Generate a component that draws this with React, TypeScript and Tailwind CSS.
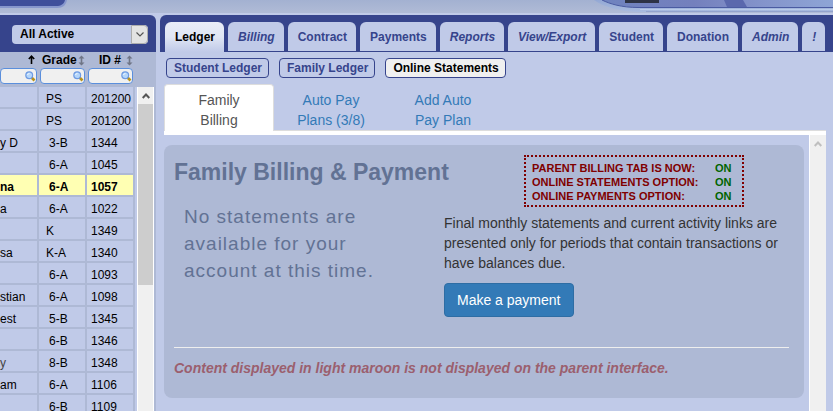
import React from "react";

const FONT = "font-['Liberation_Sans',Arial,sans-serif]";

type Student = { name: string; grade: string; id: string; selected?: boolean; dim?: boolean };

const students: Student[] = [
  { name: "", grade: "PS", id: "201200" },
  { name: "", grade: "PS", id: "201200" },
  { name: "y D", grade: "3-B", id: "1344" },
  { name: "", grade: "6-A", id: "1045" },
  { name: "na", grade: "6-A", id: "1057", selected: true },
  { name: "a", grade: "6-A", id: "1022" },
  { name: "", grade: "K", id: "1349" },
  { name: "sa", grade: "K-A", id: "1340" },
  { name: "", grade: "6-A", id: "1093" },
  { name: "stian", grade: "6-A", id: "1098" },
  { name: "est", grade: "5-B", id: "1345" },
  { name: "", grade: "6-B", id: "1346" },
  { name: "y", grade: "8-B", id: "1348", dim: true },
  { name: "am", grade: "6-A", id: "1106" },
  { name: "", grade: "6-B", id: "1109" },
];

const mainTabs = [
  { label: "Ledger", active: true },
  { label: "Billing", italic: true },
  { label: "Contract" },
  { label: "Payments" },
  { label: "Reports", italic: true },
  { label: "View/Export", italic: true },
  { label: "Student" },
  { label: "Donation" },
  { label: "Admin", italic: true },
  { label: "!", italic: true },
];

const options = [
  "PARENT BILLING TAB IS NOW:",
  "ONLINE STATEMENTS OPTION:",
  "ONLINE PAYMENTS OPTION:",
];

function Banner() {
  return (
    <header className="relative h-[15px] shrink-0 overflow-hidden border-b-2 border-[#c0cae8] bg-linear-to-b from-[#a3b1d1] to-[#b0bbd6]">
      <svg className="absolute top-0 left-0" width="80" height="13" aria-hidden="true">
        <path d="M0 0H67C66 5 63 8 57 8H0Z" fill="#8797cd" />
        <path d="M0 0H65C64 4 61 6 56 6H0Z" fill="#3f4f9b" />
      </svg>
      <svg className="absolute top-0 right-0" width="243" height="13" aria-hidden="true">
        <defs>
          <linearGradient id="sweep" x1="0" x2="1" y1="0" y2="0">
            <stop offset="0" stopColor="#6f83bf" />
            <stop offset="0.4" stopColor="#7480bd" />
            <stop offset="0.7" stopColor="#8494cb" />
            <stop offset="1" stopColor="#8ea5d6" />
          </linearGradient>
          <linearGradient id="rim" x1="0" x2="0" y1="0" y2="1">
            <stop offset="0" stopColor="#93a8d4" />
            <stop offset="1" stopColor="#a9bbdf" />
          </linearGradient>
        </defs>
        <path d="M4 0C14 7 28 11 48 12H243V0Z" fill="url(#rim)" />
        <path d="M12 0C20 4 32 7 48 7.5H243V0Z" fill="url(#sweep)" />
        <path d="M134 0H153L157 7H137Z" fill="#5a68ad" />
        <path d="M35 0H69V3H35Z" fill="#2d3345" />
        <path d="M12 0C20 4 32 7.5 48 7.5H243" fill="none" stroke="#4a5ba2" />
        <path d="M50 9.5H243" stroke="#b9cbe9" />
        <path d="M56 11.5H243" stroke="#93a3cd" />
      </svg>
    </header>
  );
}

function SortIcon({ up = false }: { up?: boolean }) {
  return (
    <svg width="7" height="11" viewBox="0 0 7 11" className="shrink-0" aria-hidden="true">
      {up ? (
        <path d="M3.5 1.5V9M0.8 4L3.5 1.2L6.2 4" fill="none" stroke="#000" strokeWidth="1.6" />
      ) : (
        <path d="M3.5 0.5L6.5 3.5H4.3V7.5H6.5L3.5 10.5L0.5 7.5H2.7V3.5H0.5Z" fill="#6f7586" />
      )}
    </svg>
  );
}

function Magnifier() {
  return (
    <svg width="11" height="11" viewBox="0 0 11 11" className="shrink-0" aria-hidden="true">
      <path d="M6.5 6.5L9.5 9.5" stroke="#b8921a" strokeWidth="2.6" />
      <circle cx="4.2" cy="4.2" r="3.4" fill="#b4d6fb" stroke="#6f9be2" strokeWidth="1.2" />
      <path d="M2.6 4C2.8 3 3.4 2.6 4.4 2.6" stroke="#fff" fill="none" />
    </svg>
  );
}

function Filter({ label }: { label: string }) {
  return (
    <div className="flex h-4 items-center rounded-sm border border-[#5b8fdc] bg-[#f0f0f0]">
      <input aria-label={label} className="h-full w-full min-w-0 bg-transparent text-xs outline-none" />
      <Magnifier />
    </div>
  );
}

function StudentList() {
  return (
    <aside className="flex w-[156px] shrink-0 flex-col overflow-hidden rounded-tr-md bg-[#36448c]">
      <div className="flex h-[37px] shrink-0 items-center pt-px pr-2 pl-3">
        <div className="relative h-[19px] w-full">
          <select
            aria-label="Student filter"
            className="block h-[19px] w-full appearance-none rounded-sm bg-[#c0cae8] pl-2 text-xs leading-[19px] font-bold text-black"
          >
            <option>All Active</option>
          </select>
          <span className="pointer-events-none absolute inset-y-0 right-0 flex w-[17px] items-center justify-center rounded-r-sm border border-[#adadad] bg-[#e3e3e3]">
            <svg width="8" height="5" viewBox="0 0 8 5" aria-hidden="true">
              <path d="M0.5 0.5L4 4L7.5 0.5" fill="none" stroke="#555" strokeWidth="1.2" />
            </svg>
          </span>
        </div>
      </div>
      <div className="flex min-h-0 flex-1 flex-col border-r-2 border-[#aeb9d5] bg-[#c0cae8]">
        <div className="h-[35px] shrink-0 bg-[#aeb9d5]">
          <div className="grid w-[133px] grid-cols-[37px_45px_45px] gap-x-[3px] text-xs font-bold text-black">
            <div className="flex h-4 items-center justify-end pr-[2px]">
              <SortIcon up />
            </div>
            <div className="flex h-4 items-center justify-between pl-[2px]">
              Grade
              <SortIcon />
            </div>
            <div className="flex h-4 items-center justify-between pl-[11px]">
              ID #
              <SortIcon />
            </div>
            <Filter label="Filter by name" />
            <Filter label="Filter by grade" />
            <Filter label="Filter by ID" />
          </div>
        </div>
        <div className="flex min-h-0 flex-1">
          <div className="w-[135px] shrink-0 overflow-hidden bg-[#aeb9d5]">
            <table className="w-[133px] table-fixed border-separate border-spacing-0 text-xs text-black">
              <colgroup>
                <col className="w-[39px]" />
                <col className="w-12" />
                <col className="w-[46px]" />
              </colgroup>
              <tbody>
                {students.map((s, i) => (
                  <tr key={i} className={s.selected ? "bg-[#ffffb3] font-bold" : "bg-[#c0cae8]"}>
                    <td className={`h-[22px] border-r-2 border-b-2 border-[#aeb9d5] p-0 pt-1 leading-4 ${s.dim ? "text-[#444]" : ""}`}>
                      {s.name}
                    </td>
                    <td
                      className={`border-r-2 border-b-2 border-[#aeb9d5] p-0 pt-1 leading-4 ${
                        /^\d/.test(s.grade) ? "pl-[10px]" : "pl-[7px]"
                      }`}
                    >
                      {s.grade}
                    </td>
                    <td className="border-b-2 border-[#aeb9d5] p-0 pt-1 pl-1 leading-4">{s.id}</td>
                  </tr>
                ))}
              </tbody>
            </table>
          </div>
          <div className="ml-[2px] flex w-[17px] flex-col border-x border-white bg-[#f0f0f0]">
            <div className="flex h-[17px] items-center justify-center">
              <ScrollArrow color="#555" />
            </div>
            <div className="h-[181px] bg-[#cdcdcd]" />
          </div>
        </div>
      </div>
    </aside>
  );
}

function ScrollArrow({ color }: { color: string }) {
  return (
    <svg width="8" height="6" viewBox="0 0 8 6" aria-hidden="true">
      <path d="M0.7 5L4 1.5L7.3 5" fill="none" stroke={color} strokeWidth="2" />
    </svg>
  );
}

function MainTabs() {
  return (
    <nav className="flex h-[37px] shrink-0 items-end gap-1 rounded-tl-md bg-[#36448c] pl-[5px] text-xs font-bold whitespace-nowrap">
      {mainTabs.map((t) => (
        <button
          key={t.label}
          className={`rounded-t-md pr-[9px] pl-[10px] ${
            t.active
              ? "h-[30px] bg-linear-to-b from-[#e9edf8] via-[#e0e6f4] to-[#c0cae8] pb-px text-black"
              : "mb-px h-[29px] bg-[#c0cae8] text-[#36448c]"
          } ${t.italic ? "italic" : ""}`}
        >
          {t.label}
        </button>
      ))}
    </nav>
  );
}

function SubNav() {
  const items = ["Student Ledger", "Family Ledger", "Online Statements"];
  return (
    <div className="flex gap-[10px] px-[6px] pt-[6px] text-xs font-bold">
      {items.map((label, i) => (
        <button
          key={label}
          className={`h-5 rounded border border-[#36448c] pr-[6px] pl-[7px] leading-4 whitespace-nowrap ${
            i === 2 ? "bg-[#f0f0f0] text-black" : "text-[#36448c]"
          }`}
        >
          {label}
        </button>
      ))}
    </div>
  );
}

function PageTabs() {
  const link = "w-[110px] pt-[6px] text-center text-[#337ab7]";
  return (
    <nav className="mt-[6px] flex h-[51px] shrink-0 flex-col border-b-4 border-white text-sm leading-5">
      <div className="flex h-[47px] gap-[2px] border-b border-[#ddd]">
        <a href="#billing" className="-mb-px w-[110px] rounded-t border border-b-0 border-[#ddd] bg-white pt-[5px] text-center text-[#555]">
          Family
          <br />
          Billing
        </a>
        <a href="#plans" className={link}>
          Auto Pay
          <br />
          Plans (3/8)
        </a>
        <a href="#add" className={link}>
          Add Auto
          <br />
          Pay Plan
        </a>
      </div>
    </nav>
  );
}

function BillingCard() {
  return (
    <section className="rounded-lg bg-[#aeb9d5] px-[10px] pt-[10px] pb-5">
      <div className="flex">
        <div className="w-[270px] shrink-0">
          <h1 className="pt-1 text-[23px] leading-[26px] font-bold whitespace-nowrap text-[#627294]">
            Family Billing &amp; Payment
          </h1>
          <p className="w-[220px] pt-[18px] pl-[10px] text-[19px] leading-[27px] tracking-[1px] text-[#627294]">
            No statements are available for your account at this time.
          </p>
        </div>
        <div className="min-w-0 flex-1 text-sm leading-5 text-[#333]">
          <div className="mr-[50px] ml-20 border-2 border-dotted border-[#800000] px-[6px] pt-1 pb-[2px]">
            <table className="text-[11px] leading-[14px] font-bold whitespace-nowrap text-[#800000]">
              <tbody>
                {options.map((o) => (
                  <tr key={o}>
                    <td className="w-[183px] p-0">{o}</td>
                    <td className="p-0 text-[#006400]">ON</td>
                  </tr>
                ))}
              </tbody>
            </table>
          </div>
          <p className="pt-[6px]">
            Final monthly statements and current activity links are presented only for periods that contain transactions or have balances due.
          </p>
          <button className="mt-[10px] h-[34px] rounded border border-[#2e6da4] bg-[#337ab7] px-3 text-white">
            Make a payment
          </button>
        </div>
      </div>
      <hr className="mt-[30px] mr-[5px] border-[#eeeeee]" />
      <p className="pt-[10px] text-sm leading-5 font-bold text-[#9b5f6e] italic">
        Content displayed in light maroon is not displayed on the parent interface.
      </p>
    </section>
  );
}

export default function App() {
  return (
    <div className={`flex h-screen flex-col overflow-hidden bg-[#c0cae8] ${FONT}`}>
      <Banner />
      <div className="flex min-h-0 flex-1 gap-1">
        <StudentList />
        <div className="flex min-w-0 flex-1 flex-col">
          <MainTabs />
          <SubNav />
          <main className="mr-[7px] ml-1 flex min-h-0 flex-1 flex-col">
            <PageTabs />
            <div className="flex min-h-0 flex-1">
              <div className="min-w-0 flex-1 overflow-hidden pt-[10px] pr-[5px]">
                <BillingCard />
              </div>
              <div className="flex w-[17px] shrink-0 justify-center border-l border-white bg-[#f0f0f0] pt-[6px]">
                <ScrollArrow color="#bfbfbf" />
              </div>
            </div>
          </main>
        </div>
      </div>
    </div>
  );
}
